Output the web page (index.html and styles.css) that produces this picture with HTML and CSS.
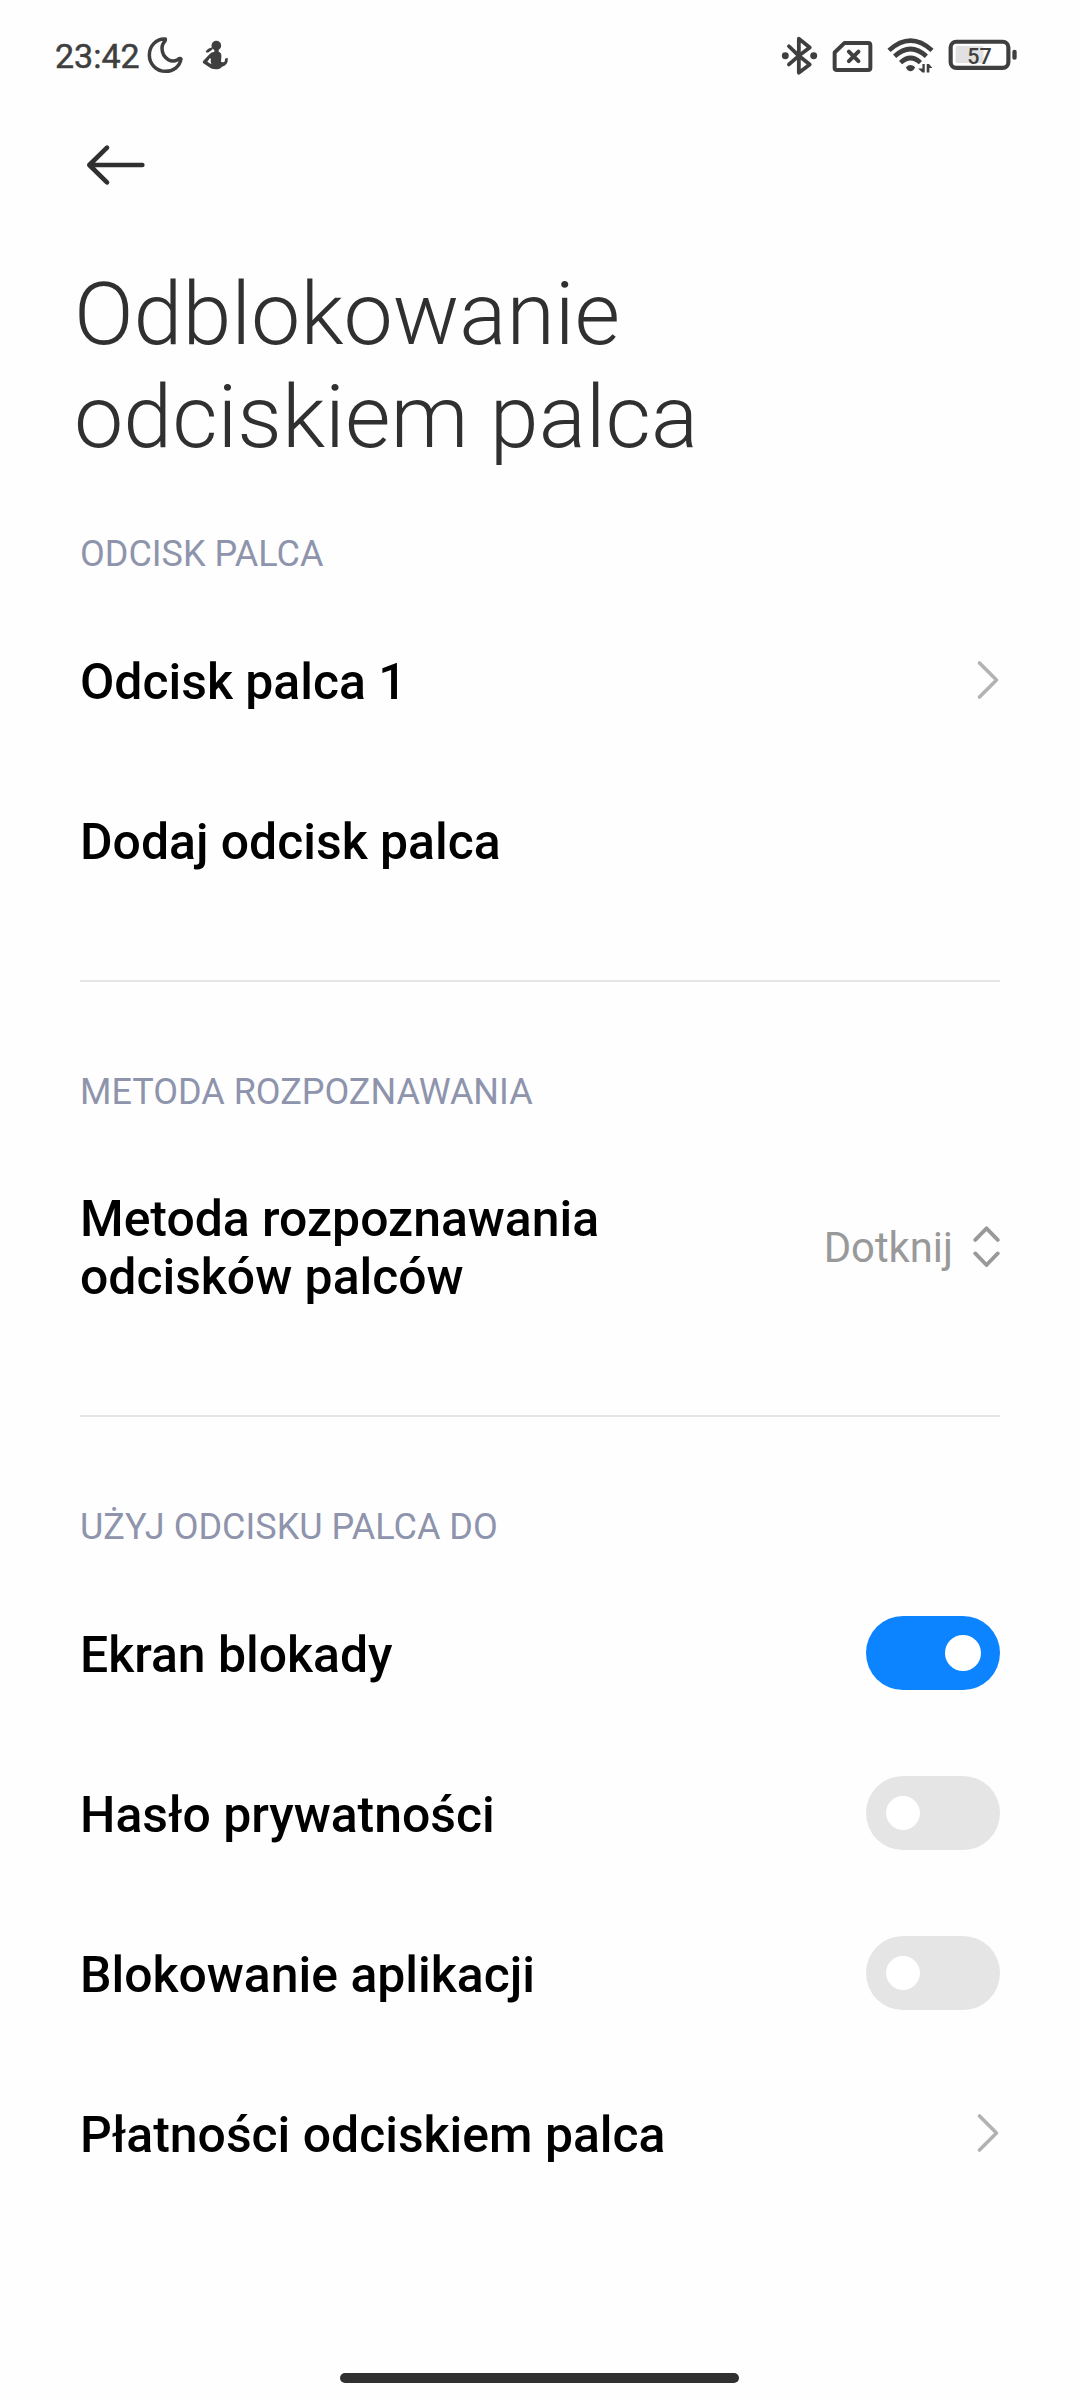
FILE: index.html
```html
<!DOCTYPE html>
<html lang="pl">
<head>
<meta charset="utf-8">
<title>Odblokowanie odciskiem palca</title>
<link rel="stylesheet" href="styles.css">
</head>
<body>
<div class="screen">
  <header class="status">
    <div class="status-left">
      <span class="time">23:42</span>
      <svg class="moon" viewBox="321 48 111 114" fill="none" stroke="#3f3f3f" stroke-width="10.5" stroke-linejoin="round"><path d="M376 57C349 55 328 78 328 105C328 133 350 154 377 154C400 154 419 140 423 117C422 114 417 115 413 119C404 124 395 125 385 119C372 111 366 98 366 84C366 74 370 68 376 61Z"/></svg>
      <svg class="figure" viewBox="486 60 81 90" fill="#3f3f3f"><circle cx="529" cy="77" r="14.5"/><path d="M517 82L518 88L506 97Q500 99 497 95Q503 85 517 82Z"/><path fill-rule="evenodd" d="M523 88H536V95Q546 99 544 112L543 125Q552 130 555 122Q552 115 563 113Q565 124 560 131Q554 138 546 140Q540 148 527 148Q514 148 508 142L489 129Q487 126 490 122L507 104Q512 97 523 95ZM510 114L502 125L514 133Q510 123 513 118Z"/></svg>
    </div>
    <div class="status-right">
      <svg class="bluetooth" viewBox="34 43 112 122"><path fill="none" stroke="#3f3f3f" stroke-width="11.5" stroke-linejoin="round" stroke-linecap="round" d="M58 76L88 105L58 131M88 105L121 131L88 156V53L121 80L88 105"/><circle cx="47" cy="105" r="10.5" fill="#3f3f3f"/><circle cx="133" cy="105" r="10.5" fill="#3f3f3f"/></svg>
      <svg class="sim" viewBox="187 61 124 98" fill="none" stroke="#3f3f3f" stroke-linejoin="round" stroke-linecap="round"><path stroke-width="12" d="M225 69H296Q303 69 303 76V144Q303 151 296 151H202Q195 151 195 144V98Z"/><path stroke-width="12" d="M238 95L267 124M267 95L238 124"/></svg>
      <svg class="wifi" viewBox="352 52 142 108"><g fill="none" stroke="#3f3f3f" stroke-width="14"><path d="M358 92Q423 33 488 92"/><path d="M375 110Q423 66 471 110"/><path d="M393 129Q423 101 453 129"/></g><path fill="#3f3f3f" d="M409 143Q423 129 437 143Q432 155 423 155Q414 155 409 143Z"/><path fill="#3f3f3f" d="M459 133H466V159H459L446 147H459ZM472 159V133H479L489 145H480V159Z"/></svg>
      <svg class="battery" viewBox="535 58 208 96"><rect x="558" y="79" width="84" height="51" rx="6" fill="#e1e1e1"/><rect x="543" y="66" width="174" height="79" rx="17" fill="none" stroke="#3f3f3f" stroke-width="12.5"/><rect x="729" y="90" width="13" height="30" rx="6" fill="#3f3f3f"/><text class="charge" x="630" y="132" text-anchor="middle">57</text></svg>
    </div>
  </header>
  <nav class="toolbar">
    <svg class="back" viewBox="140 370 180 126" fill="none" stroke="#303030" stroke-width="14" stroke-linecap="round" stroke-linejoin="round"><path d="M203 381L150 433L203 485M150 433H309"/></svg>
  </nav>
  <h1 class="title">Odblokowanie<br>odciskiem palca</h1>
  <main>
    <section class="section">
      <h2 class="label">ODCISK PALCA</h2>
      <div class="row"><span class="name">Odcisk palca 1</span><svg class="chevron" viewBox="0 0 24 42"><path d="M3.5 4L20.5 21L3.5 38"/></svg></div>
      <div class="row"><span class="name">Dodaj odcisk palca</span></div>
    </section>
    <section class="section">
      <h2 class="label">METODA ROZPOZNAWANIA</h2>
      <div class="row row-tall"><span class="name">Metoda rozpoznawania<br>odcisków palców</span><span class="value"><span class="name">Dotknij</span><svg class="updown" viewBox="520 136 80 124"><path d="M526 178L560 143L594 178M526 219L560 254L594 219"/></svg></span></div>
    </section>
    <section class="section">
      <h2 class="label">UŻYJ ODCISKU PALCA DO</h2>
      <div class="row"><span class="name">Ekran blokady</span><span class="toggle toggle-on"></span></div>
      <div class="row"><span class="name">Hasło prywatności</span><span class="toggle"></span></div>
      <div class="row"><span class="name">Blokowanie aplikacji</span><span class="toggle"></span></div>
      <div class="row"><span class="name">Płatności odciskiem palca</span><svg class="chevron" viewBox="0 0 24 42"><path d="M3.5 4L20.5 21L3.5 38"/></svg></div>
    </section>
  </main>
  <footer class="home"><div class="home-bar"></div></footer>
</div>
</body>
</html>
```
FILE: styles.css
```css
* { box-sizing: border-box; }
body { margin: 0; background: #fefefe; font-family: Roboto, "Noto Sans", sans-serif; color: #000; }
svg { display: block; flex: none; }
.screen { display: flex; flex-direction: column; width: 1080px; height: 2400px; overflow: hidden; }

.status { display: flex; justify-content: space-between; height: 112px; padding: 0 63px 0 55px; }
.status-left, .status-right { display: flex; align-items: center; height: 110px; }
.time { width: 92px; padding-top: 2px; font-size: 34px; line-height: 40px; color: #3f3f3f; -webkit-text-stroke: 0.5px #3f3f3f; }
.moon { width: 37px; height: 38px; }
.figure { width: 27px; height: 30px; margin-left: 18px; }
.bluetooth { width: 37px; height: 41px; margin-right: 14px; }
.sim { width: 41px; height: 33px; margin: 2px 14px 0 0; }
.wifi { width: 47px; height: 36px; margin-right: 14px; }
.battery { width: 69px; height: 32px; }
.charge { font-size: 65px; font-weight: 500; fill: #3f3f3f; }

.toolbar { height: 150px; padding: 32px 0 0 86px; }
.back { width: 60px; height: 42px; }

.title { margin: 0; padding: 0 74px; height: 270px; font-size: 88px; line-height: 103px; font-weight: 300; color: #303030; }

.section { padding: 0 80px 60px; }
.section + .section::before { content: ""; display: block; height: 2px; background: #e5e5e5; }
.label { margin: 0; height: 156px; padding: 89px 0 25px; font-size: 36px; line-height: 42px; font-weight: 400; color: #8f94ad; }
.section:first-child .label { height: 68px; padding-top: 1px; }
.row { display: flex; align-items: center; justify-content: space-between; height: 160px; font-size: 49.9px; line-height: 58px; font-weight: 500; }
.row-tall { height: 217px; }
.name { padding-top: 3px; }
.chevron { width: 24px; height: 42px; }
.chevron path { fill: none; stroke: #b2b2b2; stroke-width: 3.6; stroke-linecap: round; stroke-linejoin: round; }
.value { display: flex; align-items: center; gap: 20px; font-size: 41.8px; font-weight: 400; color: #999; }
.updown { width: 27px; height: 41px; }
.updown path { fill: none; stroke: #999; stroke-width: 11.5; stroke-linecap: round; stroke-linejoin: round; }

.toggle { display: flex; align-items: center; width: 134px; height: 74px; padding: 0 20px; border-radius: 37px; background: #e5e5e5; }
.toggle::before { content: ""; width: 34px; height: 34px; border-radius: 50%; background: #fff; }
.toggle-on { justify-content: flex-end; padding: 0 19px; background: #0d84ff; }
.toggle-on::before { width: 36px; height: 36px; }

.home { display: flex; justify-content: center; margin-top: auto; height: 27px; padding-right: 2px; }
.home-bar { width: 399px; height: 10px; border-radius: 5px; background: #303030; }
```
